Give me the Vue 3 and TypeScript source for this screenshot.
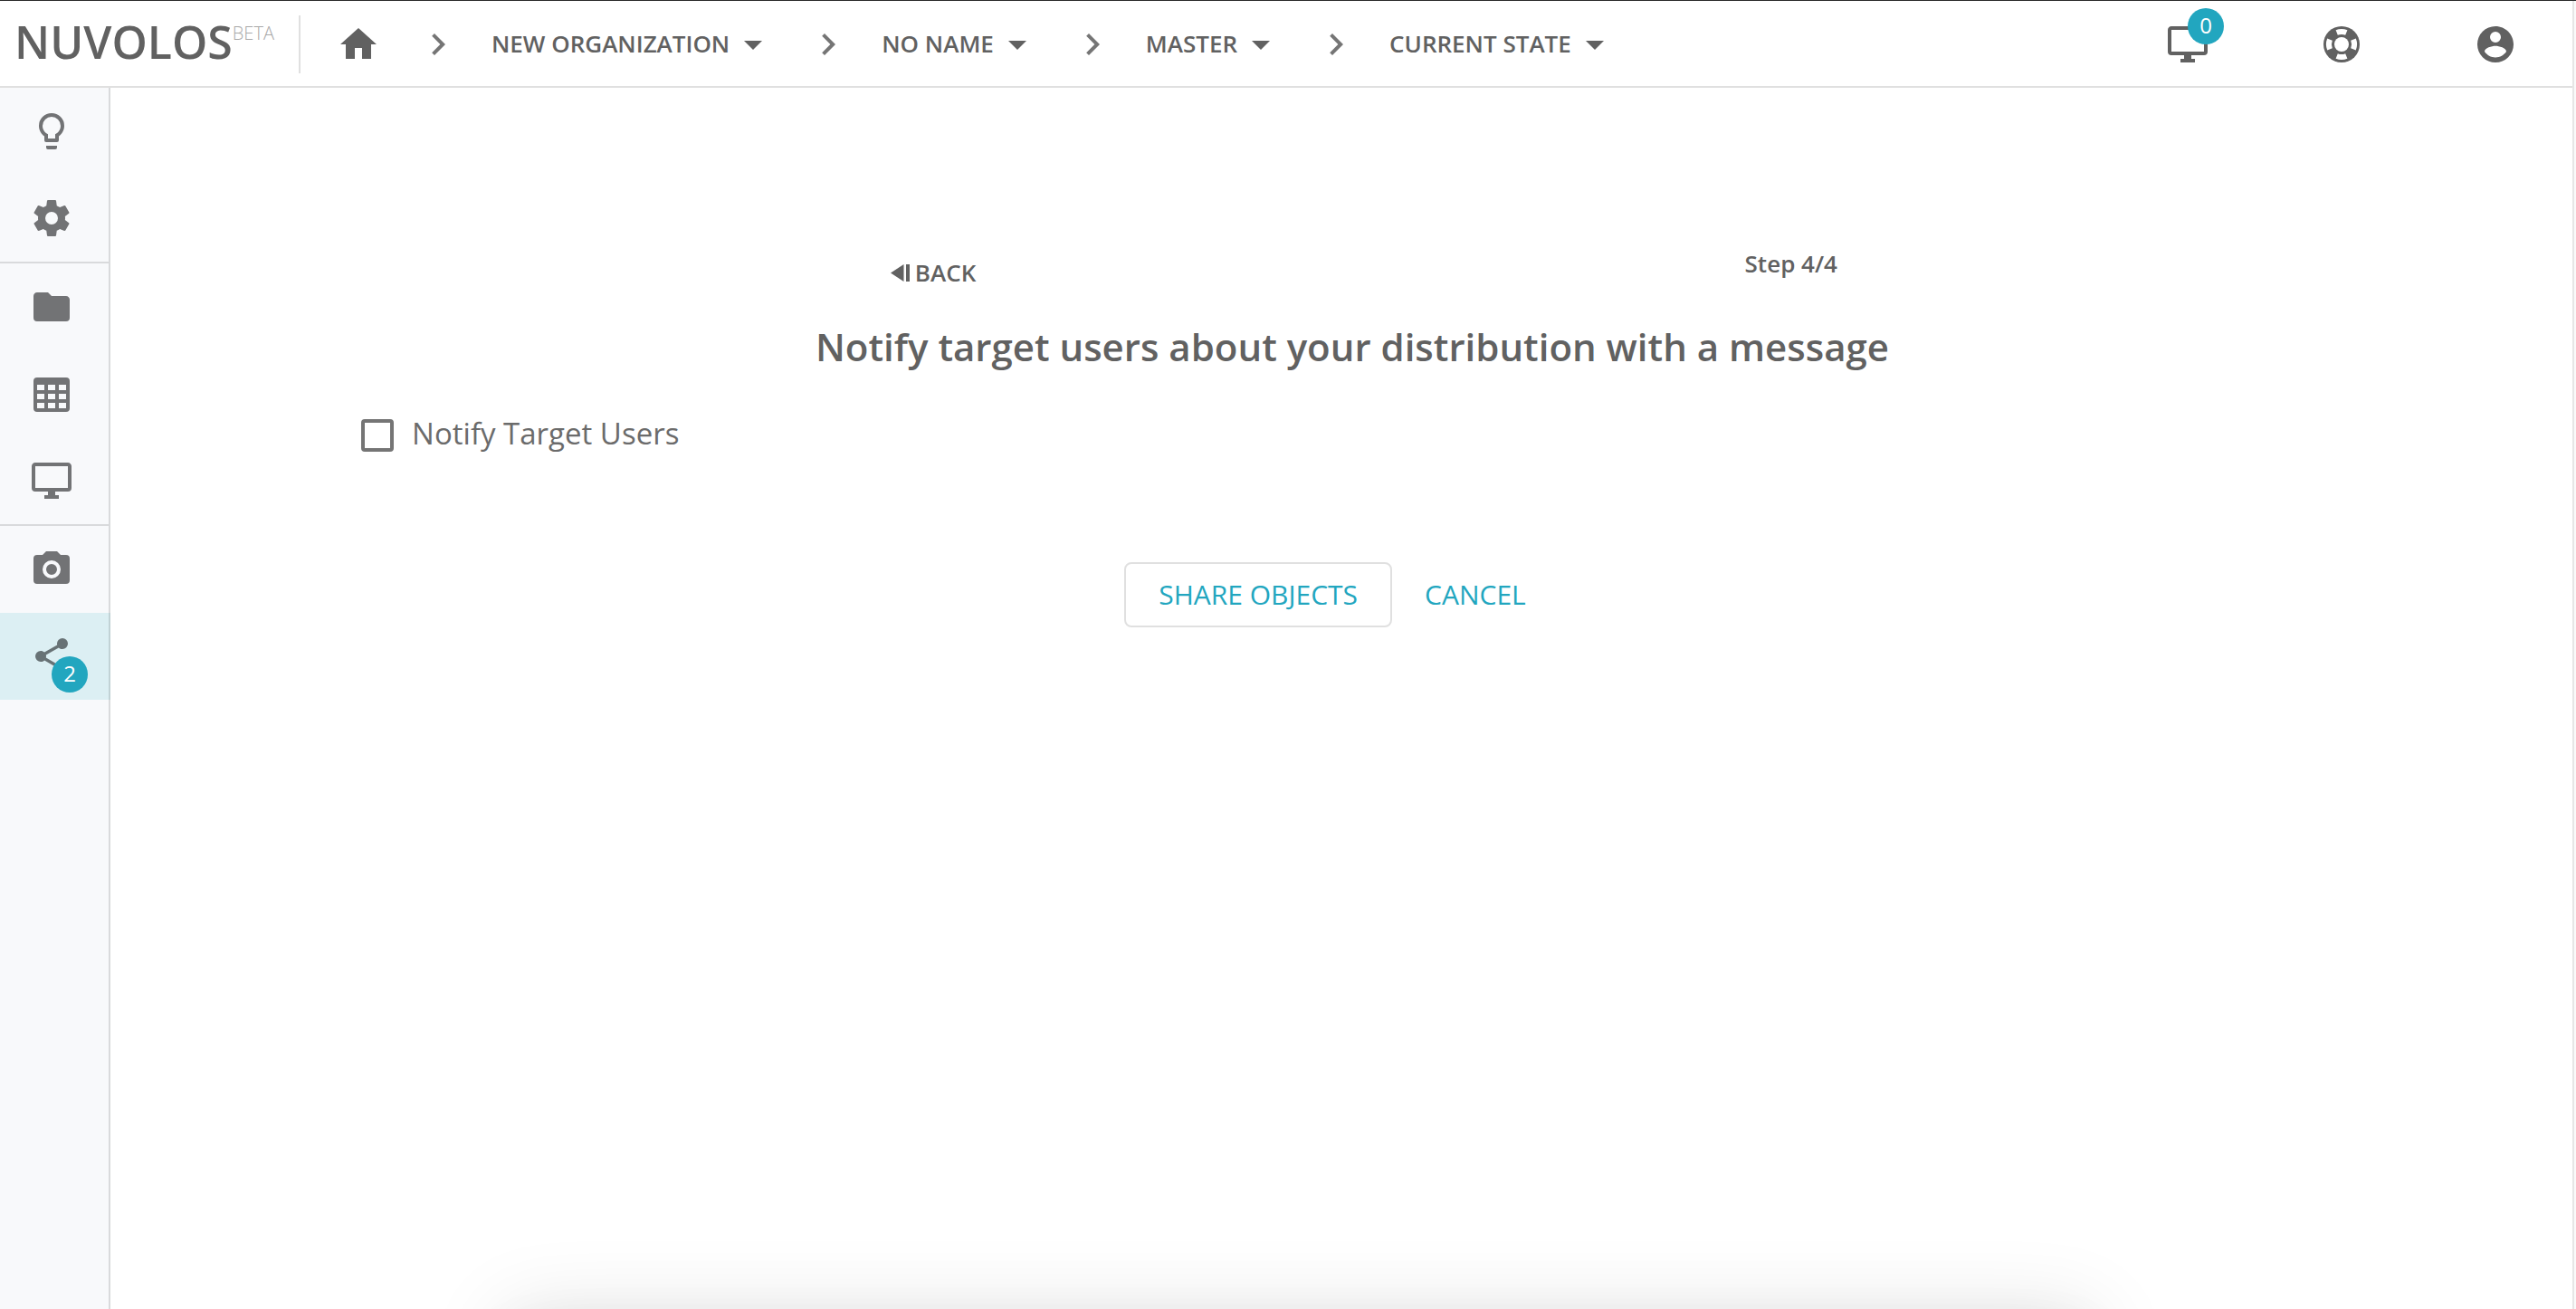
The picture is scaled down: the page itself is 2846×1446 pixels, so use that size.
<script setup lang="ts">
import { ref } from 'vue'

interface NavItem {
  label: string
  icon: string
  active?: boolean
  badge?: number
}

const icons = {
  home: 'M10,20V14H14V20H19V12H22L12,3L2,12H5V20H10Z',
  chevron: 'M8.59,16.58L13.17,12L8.59,7.41L10,6L16,12L10,18L8.59,16.58Z',
  caret: 'M7,10L12,15L17,10H7Z',
  monitor:
    'M21,16H3V4H21M21,2H3C1.89,2 1,2.89 1,4V16A2,2 0 0,0 3,18H10V20H8V22H16V20H14V18H21A2,2 0 0,0 23,16V4C23,2.89 22.1,2 21,2Z',
  account:
    'M12,19.2C9.5,19.2 7.29,17.92 6,16C6.03,14 10,12.9 12,12.9C14,12.9 17.97,14 18,16C16.71,17.92 14.5,19.2 12,19.2M12,5A3,3 0 0,1 15,8A3,3 0 0,1 12,11A3,3 0 0,1 9,8A3,3 0 0,1 12,5M12,2A10,10 0 0,0 2,12A10,10 0 0,0 12,22A10,10 0 0,0 22,12C22,6.47 17.5,2 12,2Z',
  bulb:
    'M12,2A7,7 0 0,1 19,9C19,11.38 17.81,13.47 16,14.74V17A1,1 0 0,1 15,18H9A1,1 0 0,1 8,17V14.74C6.19,13.47 5,11.38 5,9A7,7 0 0,1 12,2M9,21V20H15V21A1,1 0 0,1 14,22H10A1,1 0 0,1 9,21M12,4A5,5 0 0,0 7,9C7,11.05 8.23,12.81 10,13.58V16H14V13.58C15.77,12.81 17,11.05 17,9A5,5 0 0,0 12,4Z',
  cog:
    'M12,15.5A3.5,3.5 0 0,1 8.5,12A3.5,3.5 0 0,1 12,8.5A3.5,3.5 0 0,1 15.5,12A3.5,3.5 0 0,1 12,15.5M19.43,12.97C19.47,12.65 19.5,12.33 19.5,12C19.5,11.67 19.47,11.34 19.43,11L21.54,9.37C21.73,9.22 21.78,8.95 21.66,8.73L19.66,5.27C19.54,5.05 19.27,4.96 19.05,5.05L16.56,6.05C16.04,5.66 15.5,5.32 14.87,5.07L14.5,2.42C14.46,2.18 14.25,2 14,2H10C9.75,2 9.54,2.18 9.5,2.42L9.13,5.07C8.5,5.32 7.96,5.66 7.44,6.05L4.95,5.05C4.73,4.96 4.46,5.05 4.34,5.27L2.34,8.73C2.21,8.95 2.27,9.22 2.46,9.37L4.57,11C4.53,11.34 4.5,11.67 4.5,12C4.5,12.33 4.53,12.65 4.57,12.97L2.46,14.63C2.27,14.78 2.21,15.05 2.34,15.27L4.34,18.73C4.46,18.95 4.73,19.03 4.95,18.95L7.44,17.94C7.96,18.34 8.5,18.68 9.13,18.93L9.5,21.58C9.54,21.82 9.75,22 10,22H14C14.25,22 14.46,21.82 14.5,21.58L14.87,18.93C15.5,18.67 16.04,18.34 16.56,17.94L19.05,18.95C19.27,19.03 19.54,18.95 19.66,18.73L21.66,15.27C21.78,15.05 21.73,14.78 21.54,14.63L19.43,12.97Z',
  folder:
    'M10,4H4C2.89,4 2,4.89 2,6V18A2,2 0 0,0 4,20H20A2,2 0 0,0 22,18V8C22,6.89 21.1,6 20,6H12L10,4Z',
  table:
    'M4,3H20A2,2 0 0,1 22,5V20A2,2 0 0,1 20,22H4A2,2 0 0,1 2,20V5A2,2 0 0,1 4,3M4,7V10H8V7H4M10,7V10H14V7H10M20,10V7H16V10H20M4,12V15H8V12H4M4,20H8V17H4V20M10,12V15H14V12H10M10,20H14V17H10V20M20,20V17H16V20H20M20,12H16V15H20V12Z',
  camera:
    'M4,4H7L9,2H15L17,4H20A2,2 0 0,1 22,6V18A2,2 0 0,1 20,20H4A2,2 0 0,1 2,18V6A2,2 0 0,1 4,4M12,7A5,5 0 0,0 7,12A5,5 0 0,0 12,17A5,5 0 0,0 17,12A5,5 0 0,0 12,7M12,9A3,3 0 0,1 15,12A3,3 0 0,1 12,15A3,3 0 0,1 9,12A3,3 0 0,1 12,9Z',
  share:
    'M18,16.08C17.24,16.08 16.56,16.38 16.04,16.85L8.91,12.7C8.96,12.47 9,12.24 9,12C9,11.76 8.96,11.53 8.91,11.3L15.96,7.19C16.5,7.69 17.21,8 18,8A3,3 0 0,0 21,5A3,3 0 0,0 18,2A3,3 0 0,0 15,5C15,5.24 15.04,5.47 15.09,5.7L8.04,9.81C7.5,9.31 6.79,9 6,9A3,3 0 0,0 3,12A3,3 0 0,0 6,15C6.79,15 7.5,14.69 8.04,14.19L15.16,18.34C15.11,18.55 15.08,18.77 15.08,19C15.08,20.61 16.39,21.91 18,21.91C19.61,21.91 20.92,20.61 20.92,19A2.92,2.92 0 0,0 18,16.08Z',
}

const crumbs = ['NEW ORGANIZATION', 'NO NAME', 'MASTER', 'CURRENT STATE']

const navGroups: NavItem[][] = [
  [
    { label: 'Overview', icon: icons.bulb },
    { label: 'Settings', icon: icons.cog },
  ],
  [
    { label: 'Files', icon: icons.folder },
    { label: 'Tables', icon: icons.table },
    { label: 'Applications', icon: icons.monitor },
  ],
  [
    { label: 'Snapshots', icon: icons.camera },
    { label: 'Distribute', icon: icons.share, active: true, badge: 2 },
  ],
]

const notify = ref(false)
</script>

<template>
  <div class="page">
    <div class="app">
      <header class="topbar">
        <a class="brand" href="#">
          <span class="brand-name">NUVOLOS</span>
          <span class="brand-tag">BETA</span>
        </a>

        <nav class="crumbs" aria-label="Breadcrumb">
          <a class="home" href="#" aria-label="Home">
            <svg class="icon" viewBox="0 0 24 24"><path :d="icons.home" /></svg>
          </a>
          <template v-for="crumb in crumbs" :key="crumb">
            <svg class="icon chevron" viewBox="0 0 24 24" aria-hidden="true"><path :d="icons.chevron" /></svg>
            <button class="crumb" type="button">
              <span class="crumb-label">{{ crumb }}</span>
              <svg class="icon" viewBox="0 0 24 24" aria-hidden="true"><path :d="icons.caret" /></svg>
            </button>
          </template>
        </nav>

        <div class="actions">
          <button class="action" type="button" aria-label="Running applications">
            <svg class="icon" viewBox="0 0 24 24"><path :d="icons.monitor" /></svg>
            <span class="badge badge-above">0</span>
          </button>
          <button class="action" type="button" aria-label="Help">
            <svg class="icon" viewBox="0 0 24 24">
              <circle cx="12" cy="12" r="10" />
              <g class="ring-gaps">
                <path d="M8.8,4.1A8.5,8.5 0 0,1 15.2,4.1L14.1,6.9A5.5,5.5 0 0,0 9.9,6.9Z" />
                <path d="M8.8,4.1A8.5,8.5 0 0,1 15.2,4.1L14.1,6.9A5.5,5.5 0 0,0 9.9,6.9Z" transform="rotate(90 12 12)" />
                <path d="M8.8,4.1A8.5,8.5 0 0,1 15.2,4.1L14.1,6.9A5.5,5.5 0 0,0 9.9,6.9Z" transform="rotate(180 12 12)" />
                <path d="M8.8,4.1A8.5,8.5 0 0,1 15.2,4.1L14.1,6.9A5.5,5.5 0 0,0 9.9,6.9Z" transform="rotate(270 12 12)" />
                <circle cx="12" cy="12" r="4" />
              </g>
            </svg>
          </button>
          <button class="action" type="button" aria-label="Account">
            <svg class="icon" viewBox="0 0 24 24"><path :d="icons.account" /></svg>
          </button>
        </div>
      </header>

      <div class="body">
        <nav class="sidebar" aria-label="Main">
          <div v-for="(group, i) in navGroups" :key="i" class="nav-group">
            <a
              v-for="item in group"
              :key="item.label"
              class="nav-item"
              :class="{ active: item.active }"
              href="#"
              :aria-label="item.label"
            >
              <span class="nav-icon">
                <svg class="icon" viewBox="0 0 24 24"><path :d="item.icon" /></svg>
                <span v-if="item.badge" class="badge badge-below">{{ item.badge }}</span>
              </span>
            </a>
          </div>
          <div class="nav-rest"></div>
        </nav>

        <main class="content">
          <div class="step-row">
            <button class="back" type="button">
              <svg class="back-icon" viewBox="0 0 21 19" aria-hidden="true">
                <path d="M0,9.5L14.5,0V19ZM17,0H21V19H17Z" />
              </svg>
              <span>BACK</span>
            </button>
            <span class="step">Step 4/4</span>
          </div>

          <h1 class="title">Notify target users about your distribution with a message</h1>

          <div class="field">
            <input id="notify" v-model="notify" class="checkbox" type="checkbox" />
            <label class="field-label" for="notify">Notify Target Users</label>
          </div>

          <div class="buttons">
            <button class="btn btn-outlined" type="button">SHARE OBJECTS</button>
            <button class="btn btn-text" type="button">CANCEL</button>
          </div>
        </main>
      </div>
    </div>
    <div class="sheet-clip" aria-hidden="true"><div class="sheet"></div></div>
  </div>
</template>

<style>
body {
  margin: 0;
}
</style>

<style scoped>
.page {
  position: relative;
  box-sizing: border-box;
  display: flex;
  min-height: 100vh;
  padding-right: 2px;
  border-top: 1px solid #2a2a2a;
  background: #fafafa;
  color: #616161;
  font-family: "Open Sans", "Noto Sans", sans-serif;
}

.app {
  flex: 1;
  display: flex;
  flex-direction: column;
  border-right: 2px solid #e6e6e6;
  background: #fff;
}

button {
  padding: 0;
  border: 0;
  background: none;
  color: inherit;
  font: inherit;
  cursor: pointer;
}

a {
  color: inherit;
  text-decoration: none;
}

.icon {
  display: block;
  flex: none;
  width: 48px;
  height: 48px;
  fill: currentColor;
}

/* Top bar */
.topbar {
  display: flex;
  align-items: center;
  height: 92px;
  padding: 2px 61px 0 0;
  border-bottom: 2px solid #e0e0e0;
}

.brand {
  box-sizing: border-box;
  display: flex;
  align-items: flex-start;
  width: 332px;
  height: 64px;
  padding: 5px 0 0 16px;
  border-right: 2px solid #e0e0e0;
}

.brand-name {
  font-size: 50px;
  font-weight: 600;
  line-height: 48px;
}

.brand-tag {
  margin-top: 5px;
  color: #a8a8a8;
  font-size: 20px;
  font-weight: 300;
  line-height: 20px;
}

.crumbs {
  display: flex;
  align-items: center;
}

.home {
  margin: 0 40px;
}

.chevron {
  color: #757575;
}

.crumb {
  display: flex;
  align-items: center;
  gap: 2px;
  margin: 0 35px;
  font-size: 26px;
  font-weight: 600;
  line-height: 40px;
}

.crumb-label {
  padding-bottom: 2px;
}

.actions {
  display: flex;
  gap: 122px;
  margin-left: auto;
}

.action {
  position: relative;
}

.ring-gaps {
  fill: #fff;
}

.badge {
  position: absolute;
  left: 24px;
  width: 40px;
  height: 40px;
  border-radius: 50%;
  background: #22a6bf;
  color: #fff;
  font-size: 24px;
  font-weight: 400;
  line-height: 38px;
  text-align: center;
}

.badge-above {
  top: -16px;
}

.badge-below {
  top: 24px;
}

/* Body */
.body {
  flex: 1;
  display: flex;
}

.sidebar {
  flex: none;
  display: flex;
  flex-direction: column;
  width: 122px;
  background: #f8f9fb;
  color: #727375;
}

.nav-group + .nav-group {
  border-top: 2px solid #d9dadc;
}

.nav-item {
  box-sizing: border-box;
  display: flex;
  align-items: center;
  height: 96px;
  padding-left: 33px;
  border-right: 2px solid rgba(0, 0, 0, 0.12);
}

.nav-item.active {
  background: #dceff3;
  color: #687275;
}

.nav-icon {
  position: relative;
}

.nav-rest {
  flex: 1;
  border-right: 2px solid rgba(0, 0, 0, 0.12);
}

.content {
  flex: 1;
  padding: 174px 9.75% 80px;
}

.step-row {
  display: flex;
  align-items: flex-start;
  justify-content: space-between;
  padding: 0 24.7% 0 27%;
  font-size: 26px;
  font-weight: 600;
  line-height: 40px;
}

.back {
  display: flex;
  align-items: center;
  gap: 6px;
  margin-top: 10px;
}

.back-icon {
  width: 21px;
  height: 19px;
  fill: currentColor;
}

.title {
  margin: 34px 0 0;
  padding-left: 24px;
  font-size: 42px;
  font-weight: 600;
  line-height: 56px;
  text-align: center;
}

.field {
  display: flex;
  align-items: center;
  gap: 20px;
  margin-top: 46px;
}

.checkbox {
  appearance: none;
  box-sizing: border-box;
  width: 36px;
  height: 36px;
  margin: 0;
  border: 4px solid #757575;
  border-radius: 4px;
  cursor: pointer;
}

.checkbox:checked {
  border-color: #22a6bf;
  background: #22a6bf;
}

.field-label {
  padding-bottom: 4px;
  color: #6b6b6b;
  font-size: 33px;
  font-weight: 400;
  line-height: 44px;
}

.buttons {
  display: flex;
  justify-content: center;
  margin-top: 116px;
}

.btn {
  box-sizing: border-box;
  height: 72px;
  padding: 0 36px 2px;
  border-radius: 8px;
  color: #22a6bf;
  font-size: 30px;
  font-weight: 400;
}

.btn-outlined {
  border: 2px solid #e0e0e0;
}

/* Panel waiting below the fold; only its shadow shows */
.sheet-clip {
  position: absolute;
  inset: auto 0 0;
  height: 120px;
  overflow: hidden;
  pointer-events: none;
}

.sheet {
  height: 80px;
  margin: 124px 19.3% 0 20.2%;
  box-shadow:
    0 22px 30px -14px rgba(0, 0, 0, 0.2),
    0 48px 76px 6px rgba(0, 0, 0, 0.14),
    0 18px 92px 16px rgba(0, 0, 0, 0.12);
}
</style>
